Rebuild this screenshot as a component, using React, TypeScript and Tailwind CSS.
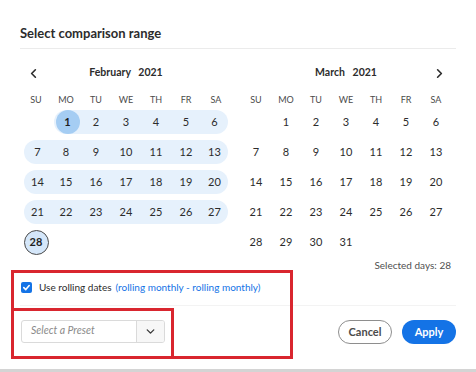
import { ChevronDown, ChevronLeft, ChevronRight } from "lucide-react"

const DAYS = ["SU", "MO", "TU", "WE", "TH", "FR", "SA"]

type Cell = { day: number | null; inRange: boolean; start: boolean; end: boolean; rowStart: boolean; rowEnd: boolean }

function buildWeeks(offset: number, total: number, range: boolean): Cell[][] {
  const cells: (number | null)[] = []
  for (let i = 0; i < offset; i++) cells.push(null)
  for (let d = 1; d <= total; d++) cells.push(d)
  while (cells.length % 7 !== 0) cells.push(null)
  const weeks: Cell[][] = []
  for (let w = 0; w < cells.length / 7; w++) {
    const row = cells.slice(w * 7, w * 7 + 7)
    const days = row.filter((d) => d !== null) as number[]
    const first = days[0]
    const last = days[days.length - 1]
    weeks.push(
      row.map((d) => ({
        day: d,
        inRange: range && d !== null,
        start: range && d === 1,
        end: range && d === total,
        rowStart: d === first,
        rowEnd: d === last,
      }))
    )
  }
  return weeks
}

function DayCell({ c }: { c: Cell }) {
  if (c.day === null) return <div className="w-[30px] h-[30px]" />
  const strip =
    c.inRange && !(c.start && c.end) && !(c.rowStart && c.rowEnd)
      ? `h-6 bg-[#e6f1fc] ${c.rowStart ? "ml-[3px] rounded-l-full" : ""} ${c.rowEnd ? "mr-[3px] rounded-r-full" : ""}`
      : "h-6"
  return (
    <div className="w-[30px] h-[30px] flex flex-col justify-center">
      <div className={`${strip} flex items-center justify-center`}>
        {c.start ? (
          <span className="w-6 h-6 rounded-full bg-[#a5cdf3] flex items-center justify-center text-[11px] font-bold text-[#1f1f1f]">
            {c.day}
          </span>
        ) : c.end ? (
          <span className="w-[25px] h-[25px] shrink-0 rounded-full bg-[#d5e7fa] border-[1.5px] border-[#4b4b4b] flex items-center justify-center text-[11px] font-bold text-[#1f1f1f]">
            {c.day}
          </span>
        ) : (
          <span className="text-[11px] text-[#2c2c2c]">{c.day}</span>
        )}
      </div>
    </div>
  )
}

function Month({ name, offset, total, range, side }: { name: string; offset: number; total: number; range: boolean; side: "left" | "right" }) {
  const weeks = buildWeeks(offset, total, range)
  return (
    <div className="w-[210px]">
      <div className="flex items-center h-5">
        <div className="w-6 flex justify-center">
          {side === "left" && <ChevronLeft size={15} strokeWidth={2.6} className="text-[#2c2c2c]" />}
        </div>
        <div className="flex-1 text-center text-[10.5px] font-bold text-[#2c2c2c] whitespace-pre">{name}   2021</div>
        <div className="w-6 flex justify-center">
          {side === "right" && <ChevronRight size={15} strokeWidth={2.6} className="text-[#2c2c2c]" />}
        </div>
      </div>
      <div className="flex mt-[10px] h-[14px] items-center">
        {DAYS.map((d) => (
          <div key={d} className="w-[30px] text-center text-[9px] text-[#4b4b4b]">
            {d}
          </div>
        ))}
      </div>
      <div className="flex flex-col">
        {weeks.map((w, i) => (
          <div key={i} className="flex">
            {w.map((c, j) => (
              <DayCell key={j} c={c} />
            ))}
          </div>
        ))}
      </div>
    </div>
  )
}

export default function App() {
  return (
    <div className="w-[476px] h-[372px] bg-white flex flex-col relative overflow-hidden" style={{ fontFamily: "Lato, 'Noto Sans', sans-serif" }}>
      <div className="flex-1 px-5 pt-[23px]">
        <h1 className="text-[13px] leading-5 font-bold text-[#2c2c2c]">Select comparison range</h1>
        <div className="mt-[5px] h-px bg-[#ebebeb]" />

        <div className="flex gap-[10px] pl-px mt-[14px]">
          <Month name="February" offset={1} total={28} range side="left" />
          <Month name="March" offset={1} total={31} range={false} side="right" />
        </div>

        <div className="mt-px pr-[5px] text-right text-[10px] leading-[14px] text-[#505050]">Selected days: 28</div>

        <div className="mt-[5px] h-5 flex items-center pl-px">
          <span className="w-[11px] h-[11px] rounded-[2px] bg-[#1473e6] flex items-center justify-center">
            <svg width="9" height="9" viewBox="0 0 10 10">
              <path d="M2 5.2 L4.2 7.3 L8 2.8" fill="none" stroke="white" strokeWidth="1.8" strokeLinecap="round" strokeLinejoin="round" />
            </svg>
          </span>
          <span className="ml-[7px] text-[10px] text-[#2c2c2c]">Use rolling dates</span>
          <span className="ml-[4px] text-[10px] text-[#1473e6]">(rolling monthly - rolling monthly)</span>
        </div>

        <div className="mt-[8px] h-px bg-[#f3f3f3]" />

        <div className="mt-[12px] flex items-center justify-between">
          <div className="ml-px flex w-[144px] h-[23px] border border-[#dadada] rounded-[3px] overflow-hidden">
            <div className="flex-1 flex items-center pl-[9px] text-[10.5px] italic text-[#8a8a8a]">Select a Preset</div>
            <div className="w-[28px] border-l border-[#dadada] bg-[#f7f7f7] flex items-center justify-center">
              <ChevronDown size={13} strokeWidth={2.6} className="text-[#3c3c3c]" />
            </div>
          </div>
          <div className="flex gap-[10px] mt-[2px]">
            <button className="w-[54px] h-6 rounded-full border border-[#8e8e8e] text-[11px] font-bold text-[#4b4b4b]">Cancel</button>
            <button className="w-[54px] h-6 rounded-full bg-[#1473e6] text-[11px] font-bold text-white">Apply</button>
          </div>
        </div>
      </div>
      <div className="h-[3px] bg-[#d4d4d4]" />

      <div className="absolute left-[11px] top-[270px] w-[282px] h-[89px] border-[3px] border-[#d9262f]" />
      <div className="absolute left-[11px] top-[308px] w-[163px] h-[51px] border-[3px] border-[#d9262f]" />
    </div>
  )
}
